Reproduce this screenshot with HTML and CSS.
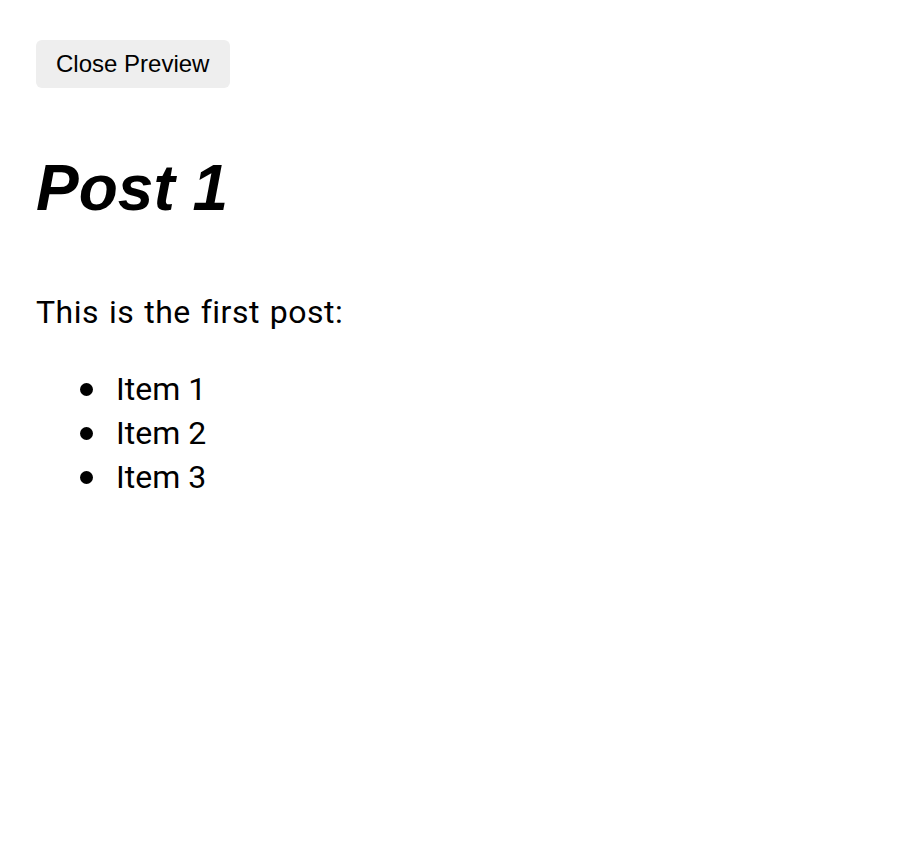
FILE: index.html
```html
<!DOCTYPE html>
<html>
<head>
<meta charset="utf-8">
<link rel="stylesheet" href="styles.css">
</head>
<body>
<main class="page">
  <button class="close-btn">Close Preview</button>
  <h1 class="post-title">Post 1</h1>
  <div class="post-body">
    <p class="post-text">This is the first post:</p>
    <ul class="post-list">
      <li class="post-item">Item 1</li>
      <li class="post-item">Item 2</li>
      <li class="post-item">Item 3</li>
    </ul>
  </div>
</main>
</body>
</html>
```
FILE: styles.css
```css
html, body {
  margin: 0;
  padding: 0;
  background: #fff;
  color: #000;
}
.page {
  padding: 40px 36px;
  display: flex;
  flex-direction: column;
  align-items: flex-start;
}
.close-btn {
  font-family: "Liberation Sans", Arial, sans-serif;
  font-size: 24px;
  line-height: 28px;
  padding: 10px 21px 10px 20px;
  height: 48px;
  border: none;
  border-radius: 6px;
  background: #eeeeee;
  color: #000;
  margin: 0;
}
.post-title {
  font-family: "Liberation Sans", Arial, sans-serif;
  font-size: 64px;
  font-weight: bold;
  font-style: italic;
  line-height: 74px;
  margin: 63px 0 0 0;
}
.post-body {
  font-family: Roboto, sans-serif;
  font-size: 32px;
  line-height: 44px;
  margin-top: 65px;
}
.post-text {
  margin: 0;
  letter-spacing: 0.5px;
  word-spacing: 1.5px;
}
.post-list {
  margin: 33px 0 0 0;
  padding-left: 80px;
  list-style: none;
}
.post-item::before {
  content: "";
  display: inline-block;
  width: 13px;
  height: 13px;
  border-radius: 50%;
  background: #000;
  margin-left: -36px;
  margin-right: 23px;
  vertical-align: 4px;
}
```
